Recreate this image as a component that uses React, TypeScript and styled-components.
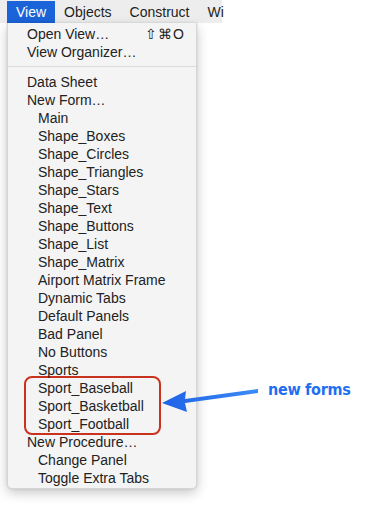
import styled, { createGlobalStyle } from "styled-components";

const GlobalStyle = createGlobalStyle`
  html, body {
    margin: 0;
    padding: 0;
    background: #ffffff;
  }
  body {
    font-family: "Liberation Sans", Arial, sans-serif;
    -webkit-font-smoothing: antialiased;
  }
`;

const Page = styled.div`
  position: relative;
  width: 371px;
  height: 506px;
  overflow: hidden;
  background: #ffffff;
`;

const MenuBar = styled.div`
  display: flex;
  width: 215px;
  height: 23px;
  padding-left: 7px;
  background: #ededed;
  white-space: nowrap;
`;

const BarItem = styled.div<{ $active?: boolean }>`
  display: flex;
  align-items: center;
  padding: 0 9px;
  height: 22px;
  margin-top: 1px;
  font-size: 14px;
  color: ${(p) => (p.$active ? "#ffffff" : "#1e1e1e")};
  background: ${(p) => (p.$active ? "#1b63d8" : "transparent")};
`;

const Menu = styled.div`
  position: absolute;
  left: 7px;
  top: 23px;
  width: 188px;
  padding: 2px 0 1px;
  background: #f4f4f4;
  border: 1px solid #d6d6d6;
  border-top: none;
  border-radius: 0 0 5px 5px;
  box-shadow: 0 4px 12px rgba(0, 0, 0, 0.22), 0 0 2px rgba(0, 0, 0, 0.15);
`;

const Row = styled.div<{ $indent?: boolean }>`
  display: flex;
  align-items: center;
  justify-content: space-between;
  height: 18px;
  padding: 0 11px 0 ${(p) => (p.$indent ? 30 : 19)}px;
  font-size: 14px;
  color: #222222;
`;

const Shortcut = styled.span`
  font-size: 14px;
  letter-spacing: 1px;
  color: #222222;
`;

const Separator = styled.div`
  height: 1px;
  margin: 5px 0 6px;
  background: #dcdcdc;
`;

const Highlight = styled.div`
  margin: -3px 0 -2px 16px;
  width: 121px;
  padding: 1px 0 0 12px;
  border: 2px solid #c9321f;
  border-radius: 8px;
`;

const HighlightRow = styled(Row)`
  padding-left: 0;
`;

const Callout = styled.div`
  position: absolute;
  left: 160px;
  top: 378px;
  display: flex;
  align-items: flex-start;
  gap: 6px;
`;

const CalloutText = styled.span`
  margin-top: 2px;
  font-family: "DejaVu Sans Condensed", "DejaVu Sans", sans-serif;
  font-stretch: condensed;
  font-weight: bold;
  font-size: 16px;
  letter-spacing: -0.3px;
  color: #1f6ff0;
`;

const Arrow = () => (
  <svg width="102" height="36" viewBox="0 0 102 36">
    <defs>
      <linearGradient id="ag" x1="0" y1="0" x2="1" y2="0">
        <stop offset="0" stopColor="#1d62e6" />
        <stop offset="1" stopColor="#3d8af7" />
      </linearGradient>
    </defs>
    <path
      d="M2 25 L26 13 L25 21 L98 11 L98 15 L25 25 L27 34 Z"
      fill="url(#ag)"
    />
  </svg>
);

const forms = [
  "Main",
  "Shape_Boxes",
  "Shape_Circles",
  "Shape_Triangles",
  "Shape_Stars",
  "Shape_Text",
  "Shape_Buttons",
  "Shape_List",
  "Shape_Matrix",
  "Airport Matrix Frame",
  "Dynamic Tabs",
  "Default Panels",
  "Bad Panel",
  "No Buttons",
  "Sports",
];

const newForms = ["Sport_Baseball", "Sport_Basketball", "Sport_Football"];

const procedures = ["Change Panel", "Toggle Extra Tabs"];

export default function App() {
  return (
    <Page>
      <GlobalStyle />
      <MenuBar>
        <BarItem $active>View</BarItem>
        <BarItem>Objects</BarItem>
        <BarItem>Construct</BarItem>
        <BarItem>Wi</BarItem>
      </MenuBar>
      <Menu>
        <Row>
          <span>Open View…</span>
          <Shortcut>⇧⌘O</Shortcut>
        </Row>
        <Row>View Organizer…</Row>
        <Separator />
        <Row>Data Sheet</Row>
        <Row>New Form…</Row>
        {forms.map((f) => (
          <Row key={f} $indent>
            {f}
          </Row>
        ))}
        <Highlight>
          {newForms.map((f) => (
            <HighlightRow key={f}>{f}</HighlightRow>
          ))}
        </Highlight>
        <Row>New Procedure…</Row>
        {procedures.map((p) => (
          <Row key={p} $indent>
            {p}
          </Row>
        ))}
      </Menu>
      <Callout>
        <Arrow />
        <CalloutText>new forms</CalloutText>
      </Callout>
    </Page>
  );
}
